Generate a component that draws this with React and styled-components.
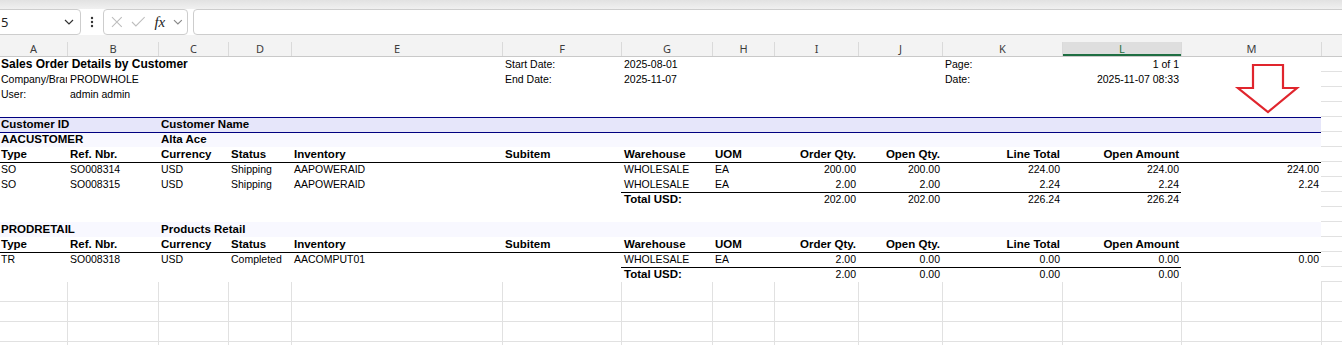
import React from 'react';
import styled, { createGlobalStyle } from 'styled-components';

const GlobalStyle = createGlobalStyle`
  html, body {
    margin: 0;
    padding: 0;
    background: #fff;
    overflow: hidden;
  }
  body {
    font-family: "Liberation Sans", Arial, sans-serif;
    color: #000;
  }
`;

const columns = [
  { key: 'A', width: 67 },
  { key: 'B', width: 91 },
  { key: 'C', width: 70 },
  { key: 'D', width: 63 },
  { key: 'E', width: 211 },
  { key: 'F', width: 119 },
  { key: 'G', width: 91 },
  { key: 'H', width: 62 },
  { key: 'I', width: 84 },
  { key: 'J', width: 84 },
  { key: 'K', width: 120 },
  { key: 'L', width: 119 },
  { key: 'M', width: 140 },
];

const template = columns.map(c => c.width + 'px').join(' ') + ' 1fr';
const totalCols = ['G', 'H', 'I', 'J', 'K', 'L'];

const b = t => ({ t, b: true });
const r = t => ({ t, r: true });
const br = t => ({ t, b: true, r: true });

const headerCells = {
  A: b('Type'), B: b('Ref. Nbr.'), C: b('Currency'), D: b('Status'), E: b('Inventory'),
  F: b('Subitem'), G: b('Warehouse'), H: b('UOM'),
  I: br('Order Qty.'), J: br('Open Qty.'), K: br('Line Total'), L: br('Open Amount'),
};

const reportRows = [
  { cells: { A: { t: 'Sales Order Details by Customer', title: true }, F: 'Start Date:', G: '2025-08-01', K: 'Page:', L: r('1 of 1') } },
  { cells: { A: { t: 'Company/Branch:', clip: true }, B: 'PRODWHOLE', F: 'End Date:', G: '2025-11-07', K: 'Date:', L: r('2025-11-07 08:33') } },
  { cells: { A: 'User:', B: 'admin admin' } },
  { cells: {} },
  { band: '#e6e6fa', top: '#000080', cells: { A: b('Customer ID'), C: b('Customer Name') } },
  { band: '#f8f8ff', top: '#000080', cells: { A: b('AACUSTOMER'), C: b('Alta Ace') } },
  { cells: headerCells },
  { top: '#000', cells: { A: 'SO', B: 'SO008314', C: 'USD', D: 'Shipping', E: 'AAPOWERAID', G: 'WHOLESALE', H: 'EA', I: r('200.00'), J: r('200.00'), K: r('224.00'), L: r('224.00'), M: r('224.00') } },
  { cells: { A: 'SO', B: 'SO008315', C: 'USD', D: 'Shipping', E: 'AAPOWERAID', G: 'WHOLESALE', H: 'EA', I: r('2.00'), J: r('2.00'), K: r('2.24'), L: r('2.24'), M: r('2.24') } },
  { totalLine: true, cells: { G: b('Total USD:'), I: r('202.00'), J: r('202.00'), K: r('226.24'), L: r('226.24') } },
  { cells: {} },
  { band: '#f8f8ff', cells: { A: b('PRODRETAIL'), C: b('Products Retail') } },
  { cells: headerCells },
  { top: '#000', cells: { A: 'TR', B: 'SO008318', C: 'USD', D: 'Completed', E: 'AACOMPUT01', G: 'WHOLESALE', H: 'EA', I: r('2.00'), J: r('0.00'), K: r('0.00'), L: r('0.00'), M: r('0.00') } },
  { totalLine: true, cells: { G: b('Total USD:'), I: r('2.00'), J: r('0.00'), K: r('0.00'), L: r('0.00') } },
];

/* ---------- formula bar ---------- */

const TopStrip = styled.div`
  height: 9px;
  background: linear-gradient(#e2e2e2, #f0f0f0);
`;

const FormulaRow = styled.div`
  display: flex;
  align-items: stretch;
  height: 26px;
  background: #fff;
`;

const Box = styled.div`
  display: flex;
  align-items: center;
  box-sizing: border-box;
  border: 1px solid #cdcdcd;
  border-radius: 4px;
  background: #fff;
`;

const NameBox = styled(Box)`
  width: 88px;
  margin-left: -7px;
  padding: 0 6px 0 7px;
  justify-content: space-between;
  font-family: "Noto Sans", "Open Sans", sans-serif;
  font-size: 13px;
  color: #222;
`;

const Dots = styled.div`
  width: 22px;
  display: flex;
  align-items: center;
  justify-content: center;
`;

const FxBox = styled(Box)`
  width: 85px;
  padding: 0 4px 0 7px;
  gap: 8px;
`;

const Fx = styled.span`
  font-family: "Liberation Serif", "DejaVu Serif", serif;
  font-style: italic;
  font-size: 15px;
  color: #222;
  margin-left: 1px;
`;

const InputBox = styled(Box)`
  flex: 1;
  margin-left: 5px;
  margin-right: -6px;
`;

const Chevron = ({ color = '#444' }) => (
  <svg width="10" height="6" viewBox="0 0 10 6">
    <polyline points="1,1 5,5 9,1" fill="none" stroke={color} strokeWidth="1.2" />
  </svg>
);

/* ---------- column headers ---------- */

const HeadBlock = styled.div`
  background: #f3f3f3;
  padding-top: 7px;
  border-bottom: 1px solid #c9c9c9;
`;

const HeadRow = styled.div`
  display: grid;
  grid-template-columns: ${template};
  height: 14px;
`;

const ColHead = styled.div`
  box-sizing: border-box;
  font-family: "Noto Sans", "Open Sans", sans-serif;
  font-size: 11px;
  line-height: 14px;
  text-align: center;
  color: ${p => (p.$selected ? '#1e6e42' : '#3c3c3c')};
  background: ${p => (p.$selected ? '#dedede' : 'transparent')};
  border-left: ${p => (p.$first ? 'none' : '1px solid #dadada')};
  box-shadow: ${p => (p.$selected ? 'inset 0 -2px 0 #1e6e42' : 'none')};
`;

/* ---------- sheet ---------- */

const Sheet = styled.div`
  position: relative;
`;

const Row = styled.div`
  display: grid;
  grid-template-columns: ${template};
  height: ${p => p.$h}px;
  background: ${p => p.$band || 'transparent'};
`;

const Cell = styled.div`
  box-sizing: border-box;
  padding: 0 2px 0 ${p => (p.$first ? 1 : 3)}px;
  white-space: nowrap;
  overflow: ${p => (p.$clip ? 'hidden' : 'visible')};
  text-align: ${p => (p.$r ? 'right' : 'left')};
  direction: ${p => (p.$r ? 'rtl' : 'ltr')};
  font-size: ${p => (p.$title ? 12 : p.$b ? 11.5 : 10.5)}px;
  font-weight: ${p => (p.$b || p.$title ? 700 : 400)};
  line-height: 15px;
  box-shadow: ${p => (p.$line ? `inset 0 1px 0 ${p.$line}` : 'none')};
`;

const EdgeCell = styled.div`
  background: #fff;
  border-bottom: 1px solid #e1e1e1;
`;

const GridCell = styled.div`
  box-sizing: border-box;
  border-bottom: 1px solid #e1e1e1;
  border-left: ${p => (p.$first ? 'none' : '1px solid #e1e1e1')};
`;

const ArrowMark = styled.svg`
  position: absolute;
  left: 1234px;
  top: 7px;
`;

function ReportRow({ row }) {
  return (
    <Row $h={15} $band={row.band}>
      {columns.map((col, i) => {
        let spec = row.cells[col.key] || '';
        if (typeof spec === 'string') spec = { t: spec };
        let line = row.top;
        if (row.totalLine && totalCols.includes(col.key)) line = '#000';
        return (
          <Cell
            key={col.key}
            $first={i === 0}
            $b={spec.b}
            $r={spec.r}
            $title={spec.title}
            $clip={spec.clip}
            $line={line}
          >
            {spec.r ? <bdi>{spec.t}</bdi> : spec.t}
          </Cell>
        );
      })}
      <EdgeCell />
    </Row>
  );
}

export default function App() {
  return (
    <>
      <GlobalStyle />
      <TopStrip />
      <FormulaRow>
        <NameBox>
          <span>5</span>
          <Chevron color="#333" />
        </NameBox>
        <Dots>
          <svg width="4" height="12" viewBox="0 0 4 12">
            <circle cx="2" cy="2" r="1.2" fill="#333" />
            <circle cx="2" cy="6" r="1.2" fill="#333" />
            <circle cx="2" cy="10" r="1.2" fill="#333" />
          </svg>
        </Dots>
        <FxBox>
          <svg width="12" height="12" viewBox="0 0 12 12">
            <path d="M1 1 L11 11 M11 1 L1 11" stroke="#bdbdbd" strokeWidth="1.1" fill="none" />
          </svg>
          <svg width="15" height="12" viewBox="0 0 15 12">
            <polyline points="1,6 5,10 14,1" stroke="#bdbdbd" strokeWidth="1.1" fill="none" />
          </svg>
          <Fx>fx</Fx>
          <Chevron color="#888" />
        </FxBox>
        <InputBox />
      </FormulaRow>
      <HeadBlock>
        <HeadRow>
          {columns.map((c, i) => (
            <ColHead key={c.key} $first={i === 0} $selected={c.key === 'L'}>
              {c.key}
            </ColHead>
          ))}
          <ColHead />
        </HeadRow>
      </HeadBlock>
      <Sheet>
        {reportRows.map((row, i) => (
          <ReportRow key={i} row={row} />
        ))}
        {[0, 1, 2, 3].map(i => (
          <Row key={'e' + i} $h={20}>
            {columns.map((c, j) => (
              <GridCell key={c.key} $first={j === 0} />
            ))}
            <GridCell />
          </Row>
        ))}
        <ArrowMark width="66" height="50" viewBox="0 0 66 50">
          <polygon
            points="19,1 49,1 49,24 63,24 34,48 4,24 19,24"
            fill="#fff"
            stroke="#e0252d"
            strokeWidth="2.2"
            strokeLinejoin="miter"
          />
        </ArrowMark>
      </Sheet>
    </>
  );
}
